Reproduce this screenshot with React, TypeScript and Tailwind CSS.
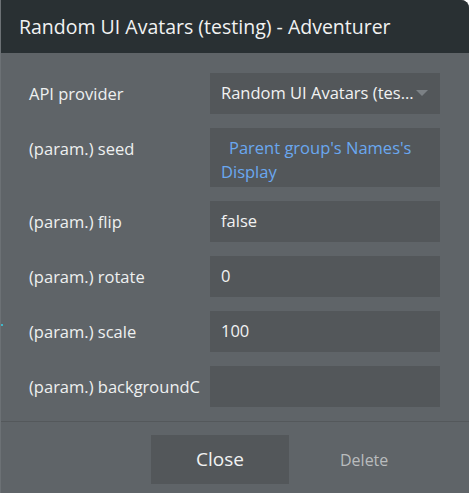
const rows = [
  { label: 'API provider', value: 'Random UI Avatars (tes...', select: true },
  { label: '(param.) seed', value: '', dynamic: true },
  { label: '(param.) flip', value: 'false' },
  { label: '(param.) rotate', value: '0' },
  { label: '(param.) scale', value: '100' },
  { label: '(param.) backgroundC', value: '' },
];

export default function App() {
  return (
    <div className="w-[472px] h-[493px] bg-white" style={{ fontFamily: '"Open Sans", "Noto Sans", sans-serif' }}>
      <div className="relative w-[469px] h-[493px] flex flex-col bg-[#5f6468] rounded-tr-[8px] overflow-hidden border-l border-[#6c7175]">
        {/* Header */}
        <div className="h-[53px] shrink-0 bg-[#293033] flex items-center pl-[18px]">
          <span className="text-[19.5px] text-[#f1f2f2]">Random UI Avatars (testing) - Adventurer</span>
        </div>

        {/* Fields */}
        <div className="flex flex-col gap-[14px] pt-[20px] pl-[28px] pr-[29px]">
          {rows.map((r) => (
            <div key={r.label} className="flex items-start">
              <div className="w-[181px] shrink-0 text-[16.5px] text-[#eef0f0] h-[41px] pt-[2px] flex items-center whitespace-nowrap">{r.label}</div>
              {r.dynamic ? (
                <div className="w-[231px] min-h-[59px] bg-[#53575a] px-[11px] pt-[8px] text-[16.5px] leading-[24px] text-[#6aa8f0] whitespace-nowrap">
                  <span className="pl-[8px]">Parent group's Names's</span>
                  <br />
                  <span>Display</span>
                </div>
              ) : (
                <div className="w-[231px] h-[41px] bg-[#53575a] pl-[11px] pr-[12px] flex items-center text-[16.5px] text-[#f1f2f2]">
                  <span className="flex-1 whitespace-nowrap">{r.value}</span>
                  {r.select && (
                    <svg width="12" height="7" viewBox="0 0 12 7" className="ml-[1px]">
                      <path d="M0 0 L12 0 L6 6 Z" fill="#7c8185" />
                    </svg>
                  )}
                </div>
              )}
            </div>
          ))}
        </div>

        {/* Footer */}
        <div className="mt-[14px] border-t border-[#54585b] flex items-start pt-[13px] pl-[150px]">
          <button className="w-[138px] h-[49px] bg-[#53575a] text-[19px] text-[#f1f2f2]">Close</button>
          <button className="ml-[51px] h-[49px] text-[16px] text-[#b9bcbe]">Delete</button>
        </div>

        <span className="absolute left-0 top-[324px] w-[2px] h-[2px] bg-[#3fb6c8]" />
      </div>
    </div>
  );
}
